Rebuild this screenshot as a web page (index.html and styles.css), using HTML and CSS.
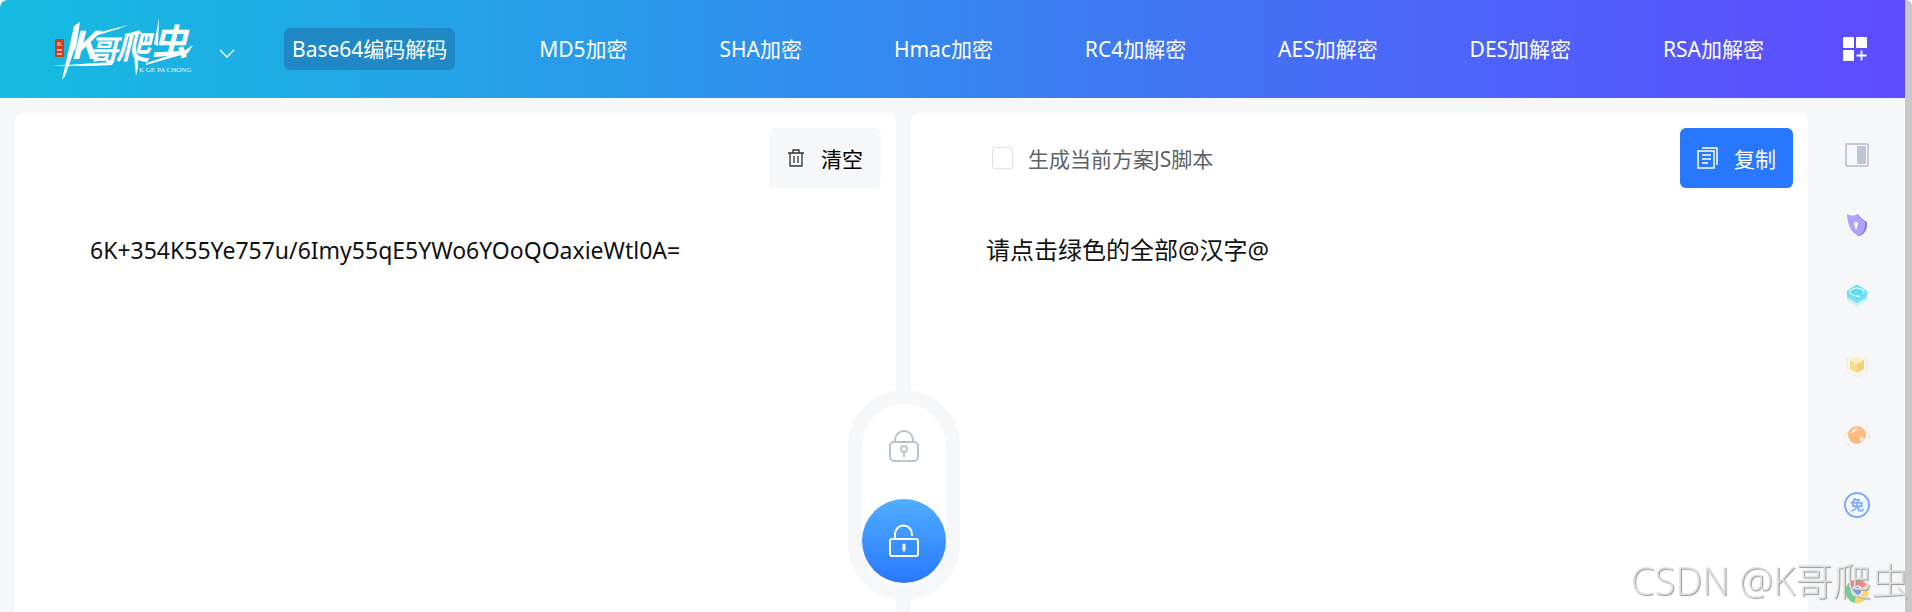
FILE: index.html
```
<!DOCTYPE html>
<html lang="zh-CN">
<head>
  <meta charset="UTF-8">
  <meta name="viewport" content="width=device-width, initial-scale=1.0">
  <title>Base64编码解码 - K哥爬虫</title>
  <link rel="stylesheet" href="styles.css">
</head>
<body>
  <div class="app">
    <!-- 头部导航 -->
    <header class="header">
      <a href="#" class="logo" aria-label="K哥爬虫">
        <svg width="152" height="70" viewBox="0 0 152 70">
          <rect x="7" y="25" width="9" height="18" rx="1" fill="#d9381e"/>
          <path d="M9 35h5v2H9zM9 39h5v2H9z" fill="#f3b9a8"/>
          <text class="logo-seal" x="9" y="32">K</text>
          <path d="M32 8l-6 4L14 66l3-4 9-25 2-3z" fill="#fff"/>
          <path d="M4 52l44-3 18-1-2 3-20 1zM45 20l27-7 8-2-10 4-23 7z" fill="#fff"/>
          <path d="M111 4l-5 26 4 2zM98 49l38-12 9-6-5 8-42 12zM86 40l2 22 2-8v-14z" fill="#fff"/>
          <g class="logo-name">
            <text x="22" y="45" font-size="38">K</text>
            <text x="41" y="47" font-size="29">哥</text>
            <text x="68" y="45" font-size="34">爬</text>
            <text x="104" y="41" font-size="36">虫</text>
          </g>
          <text class="logo-sub" x="91" y="58">K GE PA CHONG</text>
        </svg>
      </a>
      <button type="button" class="icon-btn arrow" aria-label="展开">
        <svg width="16" height="10" viewBox="0 0 16 10"><path d="M1 1l7 7 7-7" fill="none" stroke="#fff" stroke-width="1.3"/></svg>
      </button>
      <nav class="nav">
        <a href="#" class="active">Base64编码解码</a>
        <a href="#">MD5加密</a>
        <a href="#">SHA加密</a>
        <a href="#">Hmac加密</a>
        <a href="#">RC4加解密</a>
        <a href="#">AES加解密</a>
        <a href="#">DES加解密</a>
        <a href="#">RSA加解密</a>
      </nav>
      <button type="button" class="icon-btn more" aria-label="更多">
        <svg width="24" height="24" viewBox="0 0 24 24">
          <path d="M1 0h9a1 1 0 0 1 1 1v9a1 1 0 0 1-1 1H1a1 1 0 0 1-1-1V1a1 1 0 0 1 1-1zM14 0h9a1 1 0 0 1 1 1v9a1 1 0 0 1-1 1h-9a1 1 0 0 1-1-1V1a1 1 0 0 1 1-1zM1 13h9a1 1 0 0 1 1 1v9a1 1 0 0 1-1 1H1a1 1 0 0 1-1-1v-9a1 1 0 0 1 1-1z" fill="#fff"/>
          <path d="M18.500 13.500v10M13.500 18.500h10" stroke="#fff" stroke-width="1.800"/>
        </svg>
      </button>
    </header>

    <div class="content">
      <main class="main">
        <!-- 密文 -->
        <section class="panel">
          <div class="toolbar">
            <button type="button" class="btn btn-clear">
              <svg width="18" height="18" viewBox="0 0 18 18" fill="none" stroke="#333" stroke-width="1.300">
                <path d="M1 4h16M6 4V1h6v3M3 4v13h12V4M7 7v7M11 7v7"/>
              </svg>
              清空
            </button>
          </div>
          <textarea class="text" aria-label="密文" spellcheck="false">6K+354K55Ye757u/6Imy55qE5YWo6YOoQOaxieWtl0A=</textarea>
        </section>

        <!-- 明文 -->
        <section class="panel">
          <div class="toolbar">
            <label class="check" for="script">
              <input type="checkbox" id="script">
              生成当前方案JS脚本
            </label>
            <button type="button" class="btn btn-copy">
              <svg width="22" height="22" viewBox="0 0 22 22" fill="none" stroke="#fff" stroke-width="1.500">
                <path d="M5 1h15v17M1 4h16v17H1zM5 8h9M5 12h9M5 16h6"/>
              </svg>
              复制
            </button>
          </div>
          <textarea class="text text-plain" aria-label="明文" spellcheck="false">请点击绿色的全部@汉字@</textarea>
        </section>

        <!-- 加密 / 解密切换 -->
        <div class="switch">
          <button type="button" aria-label="加密">
            <svg width="30" height="32" viewBox="0 0 30 32" fill="none" stroke="#b8c4ce" stroke-width="2">
              <rect x="1" y="12" width="28" height="19" rx="4"/>
              <path d="M6 12v-2a9 9 0 0 1 18 0v2M15 22v5"/>
              <circle cx="15" cy="19" r="3"/>
            </svg>
          </button>
          <button type="button" class="on" aria-label="解密">
            <svg width="30" height="32" viewBox="0 0 30 32" fill="none" stroke="#fff" stroke-width="2">
              <rect x="1" y="14" width="28" height="17" rx="2"/>
              <path d="M6 14V9a8 8 0 0 1 17 0v2"/>
              <path d="M15 20v5" stroke-width="3" stroke-linecap="round"/>
            </svg>
          </button>
        </div>
      </main>

      <!-- 右侧工具 -->
      <aside class="side">
        <a href="#" aria-label="侧栏">
          <svg width="28" height="28" viewBox="0 0 28 28">
            <rect x="3" y="3" width="22" height="22" rx="1" fill="#f7f8fa" stroke="#c6cbda" stroke-width="2"/>
            <rect x="14" y="5" width="9" height="18" rx="1" fill="#bfc5d6"/>
          </svg>
        </a>
        <a href="#" aria-label="安全">
          <svg width="28" height="28" viewBox="0 0 28 28">
            <path d="M15 3q3 5 9 8 1 10-7 14l-3 0z" fill="#857be8"/>
            <path d="M4 3q6 3 11 0 2 5 7 8 1 9-6 14Q5 21 4 3z" fill="#aaa4fb"/>
            <circle cx="13" cy="13" r="2" fill="#fff"/><path d="M13 13v5" stroke="#fff" stroke-width="2"/>
          </svg>
        </a>
        <a href="#" aria-label="代理">
          <svg width="28" height="28" viewBox="0 0 28 28">
            <path d="M4 14l10 6 10-6v5q-5 3-10 6-5-3-10-6z" fill="#c3f2fa"/>
            <path d="M4 11l10 6 10-6v5q-5 3-10 6-5-3-10-6z" fill="#79dff2"/>
            <path d="M14 4q2 0 10 6 1 2-1 3l-9 5-9-5q-2-1-1-3 8-6 10-6z" fill="#5cdcf5"/>
            <path d="M20 13q2-2 0-4-6-4-12 0-3 2 0 4 4 3 9 2" fill="none" stroke="#d8faff" stroke-width="1.500"/>
          </svg>
        </a>
        <a href="#" aria-label="数据">
          <svg width="28" height="28" viewBox="0 0 28 28">
            <path d="M7 9l7-4 7 4-7 4z" fill="#fff0bd"/>
            <path d="M7 9l7 4v9l-7-4z" fill="#fbdc8a"/>
            <path d="M21 9l-7 4v9l7-4z" fill="#f7cf78"/>
            <path d="M4 11V8l3-2M24 11V8l-3-2M4 8v12l10 6 10-6V8" fill="none" stroke="#fae9c6"/>
          </svg>
        </a>
        <a href="#" aria-label="星球">
          <svg width="28" height="28" viewBox="0 0 28 28">
            <path d="M6 10q-7 4-3 8M22 10q7 3 4 8M24 6v-3M5 22v3" fill="none" stroke="#fbdcc2"/>
            <circle cx="14" cy="14" r="9" fill="#fcbb80"/>
            <path d="M8 12q2-5 7-5-1 3-4 4zM16 17l4-1 1 3-3 2z" fill="#fff0e0"/>
          </svg>
        </a>
        <a href="#" aria-label="免费">
          <svg width="28" height="28" viewBox="0 0 28 28">
            <circle cx="14" cy="14" r="12" fill="#f5f8ff" stroke="#7eaafc" stroke-width="2"/>
            <text class="free" x="14" y="19" text-anchor="middle">免</text>
          </svg>
        </a>
        <a href="#" class="chrome" aria-label="浏览器插件">
          <svg width="28" height="28" viewBox="0 0 28 28">
            <path d="M14 14L4 8a12 12 0 0 1 20 0z" fill="#ef8983"/>
            <path d="M14 14L4 8a12 12 0 0 0 8 18z" fill="#7ac893"/>
            <path d="M14 14l-2 12A12 12 0 0 0 24 8z" fill="#fbd76b"/>
            <circle cx="14" cy="14" r="5" fill="#6f9df0" stroke="#fff" stroke-width="1.500"/>
          </svg>
        </a>
      </aside>
    </div>
  </div>
  <div class="scrollbar"></div>
  <div class="watermark">CSDN @K哥爬虫</div>
</body>
</html>
```
FILE: styles.css
```
/* 基本样式 */
* {
  box-sizing: border-box;
}

body {
  margin: 0;
  display: flex;
  min-height: 100vh;
  background-color: #f5f7f9;
  font-family: "Noto Sans", "Noto Sans CJK SC", sans-serif;
  font-size: 21px;
}

button {
  font: inherit;
  border: none;
  background: none;
  padding: 0;
  cursor: pointer;
}

svg {
  display: block;
  overflow: visible;
}

.app {
  flex: 1;
  min-width: 0;
  display: flex;
  flex-direction: column;
}

/* 头部 */
.header {
  display: flex;
  align-items: center;
  height: 98px;
  padding: 0 38px 0 48px;
  border-radius: 8px 0 0 0;
  background: linear-gradient(90deg, #15bce0 0%, #308fee 42%, #4470f5 66%, #5e4bff 100%);
}

.logo-name {
  fill: #fff;
  font-family: "Noto Sans CJK SC", sans-serif;
  font-weight: 700;
  font-style: italic;
}

.logo-sub {
  fill: #e6f7fc;
  font-family: "Liberation Serif", serif;
  font-size: 7px;
}

.logo-seal {
  fill: #fff;
  font-family: "Liberation Serif", serif;
  font-size: 7px;
}

.arrow {
  margin: 10px 0 0 19px;
}

.nav {
  flex: 1;
  display: flex;
  justify-content: space-between;
  margin: 0 71px 0 49px;
}

.nav a {
  padding: 0 8px;
  line-height: 42px;
  border-radius: 6px;
  color: #fff;
  text-decoration: none;
  white-space: nowrap;
}

.nav a.active {
  background-color: #2089c5;
}

/* 内容 */
.content {
  flex: 1;
  display: flex;
  padding: 15px 0 0 15px;
}

.main {
  position: relative;
  flex: 1;
  display: grid;
  grid-template-columns: 881fr 897fr;
  gap: 15px;
}

.panel {
  display: flex;
  flex-direction: column;
  padding: 15px 15px 0;
  border-radius: 8px 8px 0 0;
  background-color: #fff;
}

.toolbar {
  display: flex;
  align-items: center;
  height: 60px;
}

.btn {
  display: flex;
  align-items: center;
  height: 60px;
  margin-left: auto;
  padding: 0 17px;
  gap: 15px;
  border-radius: 6px;
}

.btn-clear {
  padding: 0 18px;
  gap: 16px;
  background-color: #f5f7f9;
  color: #000;
}

.btn-copy {
  background-color: #2878ff;
  color: #fff;
}

.check {
  display: flex;
  align-items: center;
  gap: 15px;
  margin-left: 66px;
  color: #606266;
}

.check input {
  appearance: none;
  width: 21px;
  height: 22px;
  margin: 0;
  border: 1px solid #dcdfe6;
  border-radius: 3px;
  background-color: #fff;
}

.text {
  flex: 1;
  padding: 44px 60px 0;
  border: none;
  outline: none;
  resize: none;
  background: none;
  color: #111;
  font: inherit;
  font-size: 23px;
  line-height: 36px;
}

.text-plain {
  font-size: 24px;
}

/* 切换按钮，居中在两栏的间隙上 */
.switch {
  position: absolute;
  top: 277px;
  left: calc((100% - 15px) * 881 / 1778 + 8px);
  transform: translateX(-50%);
  display: flex;
  flex-direction: column;
  gap: 11px;
  padding-bottom: 3px;
  border: 14px solid #f5f7f9;
  border-radius: 56px;
  background-color: #fff;
}

.switch button {
  display: flex;
  align-items: center;
  justify-content: center;
  width: 84px;
  height: 84px;
  border-radius: 50%;
}

.switch .on {
  background: linear-gradient(#50aeff, #2878ff);
}

/* 右侧工具 */
.side {
  display: flex;
  flex-direction: column;
  align-items: center;
  gap: 42px;
  width: 97px;
  padding-top: 28px;
}

.side .chrome {
  margin-top: 16px;
}

.free {
  fill: #7eaafc;
  font-family: "Noto Sans CJK SC", sans-serif;
  font-size: 14px;
  font-weight: 700;
}

.scrollbar {
  width: 7px;
  border-radius: 0 6px 0 0;
  background-color: #c9c9c9;
}

.watermark {
  position: fixed;
  right: 3px;
  bottom: 6px;
  color: rgba(226, 226, 226, 0.9);
  font-family: "Open Sans", "Noto Sans CJK SC", sans-serif;
  font-size: 38px;
  font-weight: 300;
  text-shadow: 1px 1px 1px #999;
  pointer-events: none;
}
```
